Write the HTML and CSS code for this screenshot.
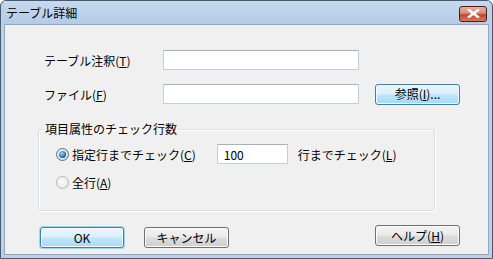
FILE: index.html
```html
<!DOCTYPE html>
<html lang="ja">
<head>
    <meta charset="UTF-8">
    <title>テーブル詳細</title>
    <link rel="stylesheet" href="styles.css">
</head>
<body>
    <div class="window">
        <div class="titlebar">
            <span class="title">テーブル詳細</span>
            <span class="close-btn">
                <svg width="13" height="9" viewBox="0 0 13 9">
                    <path d="M2 1 L11 8 M11 1 L2 8" stroke="#fff" stroke-width="2.4" stroke-linecap="square"/>
                </svg>
            </span>
        </div>
        <div class="client">
            <div class="row">
                <span class="label">テーブル注釈(<u>T</u>)</span>
                <span class="textbox"></span>
            </div>
            <div class="row row-file">
                <span class="label">ファイル(<u>F</u>)</span>
                <span class="textbox"></span>
                <span class="btn btn-blue btn-browse">参照(<u>I</u>)...</span>
            </div>

            <fieldset class="group">
                <legend>項目属性のチェック行数</legend>
                <div class="radio-row">
                    <span class="radio checked"></span>
                    <span class="radio-text">指定行までチェック(<u>C</u>)</span>
                    <span class="textbox small">100</span>
                    <span class="after-text">行までチェック(<u>L</u>)</span>
                </div>
                <div class="radio-row second">
                    <span class="radio"></span>
                    <span class="radio-text">全行(<u>A</u>)</span>
                </div>
            </fieldset>

            <div class="buttons">
                <span class="btn btn-blue btn-ok">OK</span>
                <span class="btn btn-cancel">キャンセル</span>
                <span class="btn btn-help">ヘルプ(<u>H</u>)</span>
            </div>
        </div>
    </div>
</body>
</html>
```

FILE: styles.css
```css
html {
    box-sizing: border-box;
}
*, *:before, *:after {
    box-sizing: inherit;
}
body {
    margin: 0;
    padding: 0;
    font-family: "Noto Sans CJK JP", "Liberation Sans", sans-serif;
    font-size: 12px;
    color: #000;
    background: #fff;
}

.window {
    width: 493px;
    height: 259px;
    background: #b9d1ea;
    border: 1px solid #4a5a6c;
    border-radius: 6px 6px 0 0;
    padding: 0 3px 3px 3px;
    display: flex;
    flex-direction: column;
}

.titlebar {
    height: 23px;
    display: flex;
    align-items: center;
    justify-content: space-between;
    padding: 0 2px 0 2px;
    background: linear-gradient(#c6daef, #b3cbe6);
}

.title {
    line-height: 14px;
    padding-top: 1px;
}

.close-btn {
    width: 28px;
    height: 16px;
    margin-top: 2px;
    border: 1px solid #5b1a10;
    border-radius: 3px;
    background: linear-gradient(#e3b1a6 0%, #d58b79 45%, #c0472f 55%, #d77b5e 100%);
    display: flex;
    align-items: center;
    justify-content: center;
}

.client {
    flex: 1;
    background: #f0f0f0;
    border: 1px solid #8ea6c2;
    padding: 25px 0 0 33px;
}

.row {
    display: flex;
    align-items: center;
    height: 20px;
    padding-left: 6px;
}

.row-file {
    margin-top: 14px;
}

.label {
    width: 119px;
}

u {
    text-decoration: underline;
    text-underline-offset: 1px;
}

.textbox {
    display: inline-block;
    width: 196px;
    height: 20px;
    background: #fff;
    border: 1px solid #c9ced6;
    border-top-color: #abb0b8;
    padding: 2px 0 0 6px;
    line-height: 15px;
}

.textbox.small {
    width: 71px;
    margin-left: 21px;
}

.btn {
    display: inline-flex;
    align-items: center;
    justify-content: center;
    width: 85px;
    height: 21px;
    border: 1px solid #707070;
    border-radius: 3px;
    background: linear-gradient(#f2f2f2 0%, #ebebeb 48%, #dddddd 52%, #cfcfcf 100%);
    box-shadow: inset 0 0 0 1px #fcfcfc;
    line-height: 14px;
}

.btn-blue {
    border-color: #3c7fb1;
    background: linear-gradient(#eaf6fd 0%, #d9f0fc 48%, #bee6fd 52%, #a7d9f5 100%);
    box-shadow: inset 0 0 0 1px #f4fbfe;
}

.btn-browse {
    margin-left: 16px;
}

.group {
    width: 397px;
    height: 89px;
    margin: 18px 0 0 0;
    padding: 8px 0 0 17px;
    border: 1px solid #d5dfe5;
    border-radius: 3px;
    box-shadow: inset 1px 1px 0 #fff, 1px 1px 0 #fff;
}

.group legend {
    padding: 0 1px 0 1px;
    margin-left: -12px;
    line-height: 14px;
}

.radio-row {
    display: flex;
    align-items: center;
    height: 20px;
}

.radio-row.second {
    margin-top: 8px;
}

.radio {
    width: 13px;
    height: 13px;
    border-radius: 50%;
    border: 1px solid #8f8f8f;
    background: radial-gradient(circle at 40% 40%, #f4f4f4, #d8d8d8);
    display: inline-flex;
    align-items: center;
    justify-content: center;
    margin-right: 3px;
}

.radio.checked {
    border-color: #5a6c80;
}

.radio.checked:after {
    content: "";
    width: 7px;
    height: 7px;
    border-radius: 50%;
    background: radial-gradient(circle at 40% 35%, #9ee0fb, #1f6fa8 60%, #0b4a80);
}

.radio-row.second .radio {
    border-color: #b4b4b4;
    background: radial-gradient(circle at 40% 40%, #fafafa, #e3e3e3);
}

.after-text {
    margin-left: 10px;
}

.buttons {
    display: flex;
    align-items: flex-start;
    margin-top: 14px;
    padding-left: 2px;
}

.btn-ok {
    width: 84px;
    margin-top: 2px;
    box-shadow: inset 0 0 0 1px #f4fbfe, 0 0 0 1px #9fd3f2;
}

.btn-cancel {
    margin-left: 20px;
    margin-top: 2px;
}

.btn-help {
    margin-left: 146px;
}
```
